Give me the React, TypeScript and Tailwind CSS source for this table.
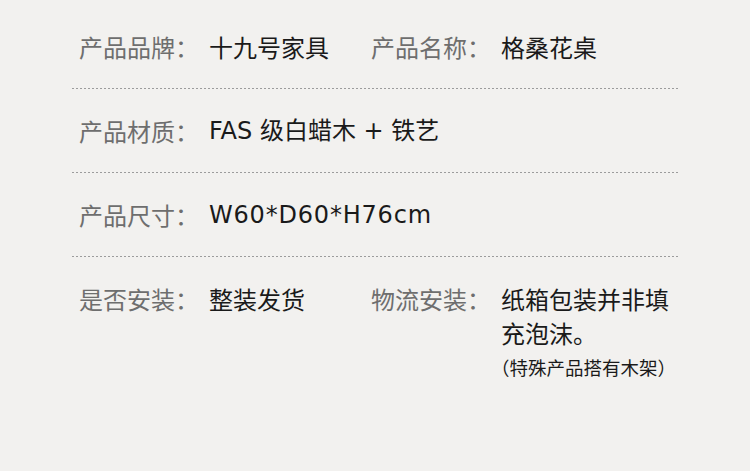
const font = "font-['Noto_Sans_CJK_SC','Noto_Sans',sans-serif]";
const latin = "block h-[34px] font-['DejaVu_Sans','Noto_Sans_CJK_SC',sans-serif]";

type Cell = { label: string; value: React.ReactNode };

const rows: Cell[][] = [
  [
    { label: "产品品牌：", value: "十九号家具" },
    { label: "产品名称：", value: "格桑花桌" },
  ],
  [{ label: "产品材质：", value: <span className={latin}>FAS 级白蜡木 + 铁艺</span> }],
  [{ label: "产品尺寸：", value: <span className={`${latin} tracking-[0.8px]`}>W60*D60*H76cm</span> }],
  [
    { label: "是否安装：", value: "整装发货" },
    {
      label: "物流安装：",
      value: (
        <>
          <div>纸箱包装并非填充泡沫。</div>
          <div className="mt-[2px] -ml-[10px] text-[18.5px] leading-[30px]">（特殊产品搭有木架）</div>
        </>
      ),
    },
  ],
];

const Divider = () => (
  <div className="h-px w-full bg-[repeating-linear-gradient(to_right,#9c9c9c_0_2px,transparent_2px_4px)]" />
);

const Item = ({ label, value, wide }: Cell & { wide?: boolean }) => (
  <div className={`flex ${wide ? "flex-1" : "w-[292px]"}`}>
    <div className="w-[130px] shrink-0 text-[#6e6e6e]">{label}</div>
    <div className="flex-1 text-[#1a1a1a]">{value}</div>
  </div>
);

export default function App() {
  return (
    <div className={`w-[750px] h-[471px] bg-[#f2f1ef] overflow-hidden ${font}`}>
      <div className="ml-[72px] w-[606px] pt-[30px] text-[24px] leading-[34px]">
        {rows.map((row, i) => (
          <div key={i}>
            <div className="flex pl-[7px]">
              {row.map((c, j) => (
                <Item key={j} {...c} wide={row.length === 1 || j === 1} />
              ))}
            </div>
            {i < rows.length - 1 && (
              <div className="mt-[24px] mb-[25px]">
                <Divider />
              </div>
            )}
          </div>
        ))}
      </div>
    </div>
  );
}
